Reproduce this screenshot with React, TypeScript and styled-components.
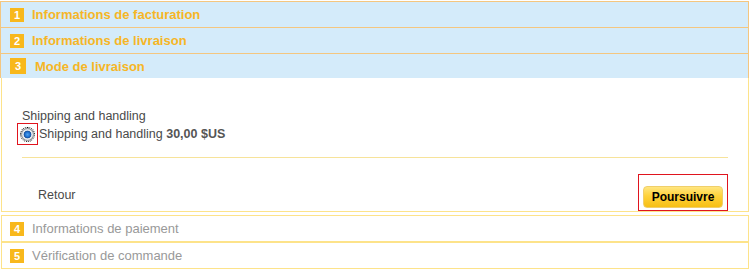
import styled, { createGlobalStyle } from 'styled-components';

const GlobalStyle = createGlobalStyle`
  body {
    margin: 0;
    background: #ffffff;
    font-family: "Liberation Sans", Arial, sans-serif;
  }
`;

function App() {
  return (
    <>
      <GlobalStyle />
      <Wrap>
        <DoneSteps>
          <HeadRow $h={25}>
            <Badge>1</Badge>
            <HeadTitle>Informations de facturation</HeadTitle>
          </HeadRow>
          <HeadRow $h={25}>
            <Badge>2</Badge>
            <HeadTitle>Informations de livraison</HeadTitle>
          </HeadRow>
          <HeadRow $h={24} $last>
            <Badge $big>3</Badge>
            <HeadTitle $big>Mode de livraison</HeadTitle>
          </HeadRow>
        </DoneSteps>

        <Content>
          <Label>Shipping and handling</Label>
          <RadioRow>
            <FocusBox>
              <Radio />
            </FocusBox>
            <RadioText>
              Shipping and handling <b>30,00 $US</b>
            </RadioText>
          </RadioRow>
          <Divider />
          <Footer>
            <Back>Retour</Back>
            <ButtonFrame>
              <NextBtn>Poursuivre</NextBtn>
            </ButtonFrame>
          </Footer>
        </Content>

        <TodoRow $first>
          <Badge>4</Badge>
          <TodoTitle>Informations de paiement</TodoTitle>
        </TodoRow>
        <TodoRow>
          <Badge>5</Badge>
          <TodoTitle>Vérification de commande</TodoTitle>
        </TodoRow>
      </Wrap>
    </>
  );
}

export default App;

const Wrap = styled.div`
  width: 749px;
  margin-top: 1px;
`;

const DoneSteps = styled.div`
  border: 1px solid #f4c67f;
  border-bottom: none;
  background: #d4ebfa;
`;

const HeadRow = styled.div<{ $h: number; $last?: boolean }>`
  display: flex;
  align-items: center;
  height: ${(p) => p.$h}px;
  padding-left: 9px;
  border-bottom: ${(p) => (p.$last ? 'none' : '1px solid #f4c67f')};
`;

const Badge = styled.span<{ $big?: boolean }>`
  display: inline-flex;
  align-items: center;
  justify-content: center;
  width: ${(p) => (p.$big ? 16 : 14)}px;
  height: ${(p) => (p.$big ? 16 : 14)}px;
  background: #f8b81c;
  color: #ffffff;
  font-size: 11px;
  font-weight: bold;
  flex-shrink: 0;
`;

const HeadTitle = styled.span<{ $big?: boolean }>`
  margin-left: ${(p) => (p.$big ? 9 : 8)}px;
  color: #f6b626;
  font-size: 13px;
  font-weight: bold;
`;

const Content = styled.div`
  margin-left: 1px;
  border: 1px solid #fde38a;
  border-top: none;
  padding: 30px 20px 0 20px;
`;

const Label = styled.div`
  font-size: 12.5px;
  line-height: 16px;
  color: #4a4a4a;
`;

const RadioRow = styled.div`
  display: flex;
  align-items: center;
  margin-left: -5px;
  margin-top: -1px;
`;

const FocusBox = styled.span`
  display: inline-flex;
  align-items: center;
  justify-content: center;
  width: 19px;
  height: 20px;
  border: 1px solid #e0141e;
  flex-shrink: 0;
`;

const Radio = styled.span`
  width: 13px;
  height: 13px;
  border-radius: 50%;
  outline: 1px dotted #000000;
  outline-offset: 0px;
  box-sizing: border-box;
  border: 1px solid #8a8f96;
  background: radial-gradient(
    circle at 50% 50%,
    #4fa3f0 0,
    #1e6fcf 2.5px,
    #174f98 3.5px,
    #e9ecef 4.2px,
    #c5cad0 100%
  );
`;

const RadioText = styled.span`
  font-size: 12.5px;
  color: #4a4a4a;
  margin-left: 1px;

  b {
    color: #555555;
  }
`;

const Divider = styled.div`
  margin-top: 12px;
  height: 1px;
  background: #f7e39a;
`;

const Footer = styled.div`
  display: flex;
  justify-content: space-between;
  align-items: center;
  margin-top: 16px;
`;

const Back = styled.span`
  padding-left: 16px;
  padding-top: 4px;
  font-size: 12.5px;
  color: #4a4a4a;
`;

const ButtonFrame = styled.div`
  display: flex;
  align-items: flex-end;
  box-sizing: border-box;
  height: 37px;
  width: 90px;
  padding: 0 4px 2px 4px;
  border: 1px solid #e0141e;
`;

const NextBtn = styled.button`
  width: 80px;
  height: 22px;
  border: 1px solid #f0cf6a;
  border-radius: 4px;
  background: linear-gradient(#ffe680 0%, #ffd23a 45%, #f6bf14 100%);
  color: #000000;
  font-family: "Liberation Sans", Arial, sans-serif;
  font-size: 12px;
  font-weight: bold;
  padding: 0;
  cursor: pointer;
`;

const TodoRow = styled.div<{ $first?: boolean }>`
  display: flex;
  align-items: center;
  margin-left: 1px;
  margin-top: ${(p) => (p.$first ? 3 : 0)}px;
  height: 25px;
  padding-left: 8px;
  border: 1px solid #fde38a;
`;

const TodoTitle = styled.span`
  margin-left: 8px;
  color: #999999;
  font-size: 13px;
`;
